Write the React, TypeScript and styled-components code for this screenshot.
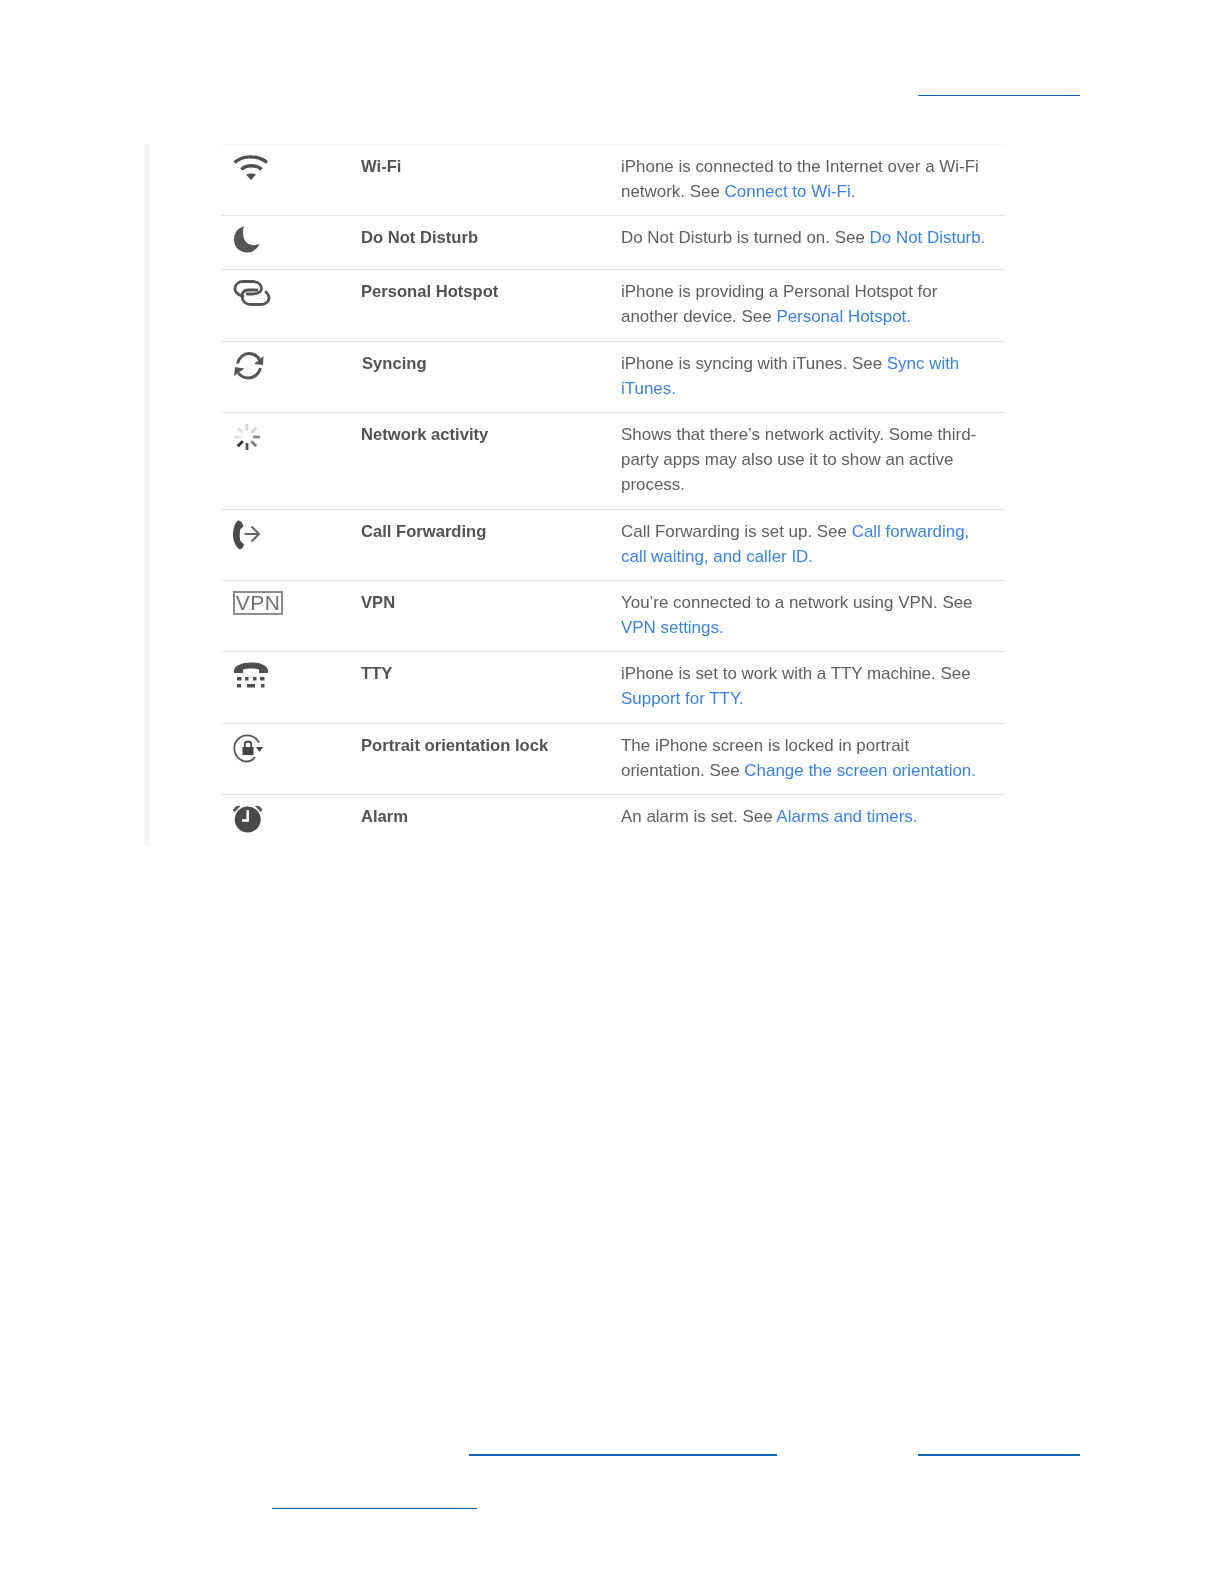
import styled, { createGlobalStyle } from "styled-components";
import type { ReactNode } from "react";

const GlobalStyle = createGlobalStyle`
  html, body {
    margin: 0;
    padding: 0;
    background: #ffffff;
  }
`;

const Page = styled.div`
  width: 1224px;
  height: 1584px;
  display: flex;
  flex-direction: column;
  font-family: "Liberation Sans", Arial, sans-serif;
`;

const LinkRule = styled.div<{ $left: number; $width: number; $top: number }>`
  margin-left: ${({ $left }) => $left}px;
  margin-top: ${({ $top }) => $top}px;
  width: ${({ $width }) => $width}px;
  height: 1px;
  background: #1366b0;
`;

const RuleRow = styled.div`
  display: flex;
  height: 2px;
  margin-top: 609px;
`;

const InlineRule = styled.div<{ $left: number; $width: number }>`
  margin-left: ${({ $left }) => $left}px;
  width: ${({ $width }) => $width}px;
  height: 2px;
  background: #1366b0;
`;

const Panel = styled.div`
  margin: 48px 0 0 144px;
  width: 861px;
  height: 701px;
  box-sizing: border-box;
  border-left: 5px solid #f3f3f3;
  padding-left: 73px;
`;

const Row = styled.div<{ $height: number; $first?: boolean }>`
  display: grid;
  grid-template-columns: 139px 260px 368px;
  height: ${({ $height }) => $height}px;
  box-sizing: border-box;
  border-top: 1px solid ${({ $first }) => ($first ? "#f6f6f6" : "#e2e2e2")};
  padding-top: 9px;
`;

const IconCell = styled.div`
  margin-top: 1px;
  padding-left: 11px;
  svg {
    display: block;
  }
`;

const Name = styled.div<{ $shift?: number }>`
  padding-left: ${({ $shift }) => $shift ?? 0}px;
  font-size: 16.6px;
  line-height: 25px;
  font-weight: 700;
  color: #525252;
  filter: blur(0.35px);
`;

const Desc = styled.div`
  font-size: 16.95px;
  line-height: 25px;
  color: #5e5e5e;
  filter: blur(0.35px);
`;

const A = styled.a`
  color: #3b82e0;
  text-decoration: none;
`;

const Wifi = () => (
  <svg width="36" height="28" viewBox="0 0 36 28" fill="none" stroke="#4f4f4f" strokeWidth="3.400">
    <path d="M1.500 7.500C10 0 25 0 34 7.500" />
    <path d="M8.500 14.500C13 9.500 24 9.500 28.500 14.500" />
    <path d="M13 19.500C16 18 20 18 23 19.500L18 25Z" fill="#4f4f4f" stroke="none" />
  </svg>
);

const Moon = () => (
  <svg width="28" height="28" viewBox="0 0 28 28">
    <path
      d="M11 0.500C4 2 1 8 1 14C1 21 7 26.500 14 26.500C20 26.500 24 23 26.500 18C19 21 12 18 10.500 11C9.800 7 10 3 11 0.500Z"
      fill="#555"
    />
  </svg>
);

const Hotspot = () => (
  <svg width="38" height="28" viewBox="0 0 38 28" fill="none" stroke="#555" strokeWidth="2.800" strokeLinecap="round">
    <path d="M10 16C4 15 1.500 11 2 8C2.500 4 6 1.500 10 1.500H20C25 1.500 29 5 28.500 9C28 12 24 14 20 14H14" />
    <path d="M24 10H15C11 10 8.500 13 9 17C9.500 21.500 13 24.500 18 24.500H28C33 24.500 36.500 21 36 17C35.700 14.500 34 13 33 12" />
  </svg>
);

const Sync = () => (
  <svg width="32" height="28" viewBox="0 0 32 28" fill="none" stroke="#555" strokeWidth="3">
    <path d="M4.500 11.500C6 5 11 1.500 16 1.500C20.500 1.500 24.500 4 26.500 8" />
    <path d="M30.500 4L30 13L21 12Z" fill="#555" stroke="none" />
    <path d="M27.500 16C26 22 21 26 15.500 26C11 26 7.500 24 5.500 21" />
    <path d="M1 24L2 15L11.500 16.500Z" fill="#555" stroke="none" />
  </svg>
);

const SPOKES = [
  { a: 0, c: "#d8d8d8" },
  { a: 45, c: "#d2d2d2" },
  { a: 90, c: "#8c8c8c" },
  { a: 135, c: "#7d7d7d" },
  { a: 180, c: "#505050" },
  { a: 225, c: "#2f2f2f" },
  { a: 270, c: "#e2e2e2" },
  { a: 315, c: "#e0e0e0" },
];

const Spinner = () => (
  <svg width="28" height="28" viewBox="-14 -14 28 28">
    {SPOKES.map(({ a, c }) => (
      <rect key={a} x="-1.400" y="-13" width="2.800" height="7" fill={c} transform={`rotate(${a})`} />
    ))}
  </svg>
);

const CallForward = () => (
  <svg width="30" height="32" viewBox="0 0 30 32" fill="none">
    <path
      d="M5 0.500C7.500 0 9.500 3 10.500 6.500L7.500 9C6.500 12 6.500 18 7.500 21L11 24.500C10.500 27 9 29.500 6.500 29.500C2.500 26.500 0 20 0 15C0 10 1.500 3 5 0.500Z"
      fill="#4a4a4a"
    />
    <path d="M11.500 14H25.500M18.500 6.500L26 14L18.500 21.500" stroke="#666" strokeWidth="2" />
  </svg>
);

const VpnBadge = styled.div`
  box-sizing: border-box;
  width: 50px;
  height: 24px;
  border: 2px solid #8c8c8c;
  color: #707070;
  font-size: 21px;
  line-height: 20px;
  letter-spacing: 0.5px;
  text-align: center;
  filter: blur(0.3px);
`;

const Tty = () => (
  <svg width="36" height="28" viewBox="0 0 36 28" fill="#4f4f4f">
    <path d="M1 9C1 3.500 9 0.500 18 0.500C27 0.500 35 3.500 35 9V11H26V7.500C22 6 14 6 10 7.500V11H1Z" />
    <rect x="4" y="15" width="4.500" height="3.500" />
    <rect x="12" y="15" width="3.500" height="3.500" />
    <rect x="20" y="15" width="3.500" height="3.500" />
    <rect x="27" y="15" width="4.500" height="3.500" />
    <rect x="4" y="22" width="4" height="3.500" />
    <rect x="14" y="22" width="8" height="3.500" />
    <rect x="28" y="22" width="3.500" height="3.500" />
  </svg>
);

const RotationLock = () => (
  <svg width="32" height="30" viewBox="0 0 32 30" fill="none">
    <path
      d="M22 23C20 26 17 27.500 14 27.500C7 27.500 1.300 21.500 1.300 14C1.300 7 7 1.300 14 1.300C19 1.300 23.500 4 26 8.500"
      stroke="#555"
      strokeWidth="1.800"
    />
    <path d="M23 13H30L26.500 18Z" fill="#444" />
    <rect x="9.500" y="13" width="11" height="8" fill="#444" />
    <path d="M11.800 13V10.500C11.800 6.500 18.200 6.500 18.200 10.500V13" stroke="#444" strokeWidth="1.800" />
  </svg>
);

const Alarm = () => (
  <svg width="30" height="30" viewBox="0 0 30 30" fill="none">
    <circle cx="14.700" cy="14.500" r="13" fill="#4a4a4a" />
    <path d="M0 5.500C1 2 4 0 7.500 1L2 7Z" fill="#5c5c5c" />
    <path d="M29.500 5.500C28.500 2 25.500 0 22 1L27.500 7Z" fill="#5c5c5c" />
    <path d="M14.700 5V15.500H9" stroke="#fff" strokeWidth="2.400" />
  </svg>
);

type Item = { height: number; icon: ReactNode; name: string; shift?: number; desc: ReactNode };

const ITEMS: Item[] = [
  {
    height: 71,
    icon: <Wifi />,
    name: "Wi-Fi",
    desc: (
      <>
        iPhone is connected to the Internet over a Wi-Fi network. See <A>Connect to Wi-Fi.</A>
      </>
    ),
  },
  {
    height: 54,
    icon: <Moon />,
    name: "Do Not Disturb",
    desc: (
      <>
        Do Not Disturb is turned on. See <A>Do Not Disturb.</A>
      </>
    ),
  },
  {
    height: 72,
    icon: <Hotspot />,
    name: "Personal Hotspot",
    desc: (
      <>
        iPhone is providing a Personal Hotspot for another device. See <A>Personal Hotspot.</A>
      </>
    ),
  },
  {
    height: 71,
    icon: <Sync />,
    name: "Syncing",
    shift: 1,
    desc: (
      <>
        iPhone is syncing with iTunes. See <A>Sync with iTunes.</A>
      </>
    ),
  },
  {
    height: 97,
    icon: <Spinner />,
    name: "Network activity",
    desc: "Shows that there’s network activity. Some third-party apps may also use it to show an active process.",
  },
  {
    height: 71,
    icon: <CallForward />,
    name: "Call Forwarding",
    desc: (
      <>
        Call Forwarding is set up. See <A>Call forwarding, call waiting, and caller ID.</A>
      </>
    ),
  },
  {
    height: 71,
    icon: <VpnBadge>VPN</VpnBadge>,
    name: "VPN",
    desc: (
      <>
        You’re connected to a network using VPN. See <A>VPN settings.</A>
      </>
    ),
  },
  {
    height: 72,
    icon: <Tty />,
    name: "TTY",
    desc: (
      <>
        iPhone is set to work with a TTY machine. See <A>Support for TTY.</A>
      </>
    ),
  },
  {
    height: 71,
    icon: <RotationLock />,
    name: "Portrait orientation lock",
    desc: (
      <>
        The iPhone screen is locked in portrait orientation. See <A>Change the screen orientation.</A>
      </>
    ),
  },
  {
    height: 51,
    icon: <Alarm />,
    name: "Alarm",
    desc: (
      <>
        An alarm is set. See <A>Alarms and timers.</A>
      </>
    ),
  },
];

export default function App() {
  return (
    <Page>
      <GlobalStyle />
      <LinkRule $left={918} $width={162} $top={95} />
      <Panel>
        {ITEMS.map((item, i) => (
          <Row key={item.name} $height={item.height} $first={i === 0}>
            <IconCell>{item.icon}</IconCell>
            <Name $shift={item.shift}>{item.name}</Name>
            <Desc>{item.desc}</Desc>
          </Row>
        ))}
      </Panel>
      <RuleRow>
        <InlineRule $left={469} $width={308} />
        <InlineRule $left={141} $width={162} />
      </RuleRow>
      <LinkRule $left={272} $width={205} $top={52} />
    </Page>
  );
}
